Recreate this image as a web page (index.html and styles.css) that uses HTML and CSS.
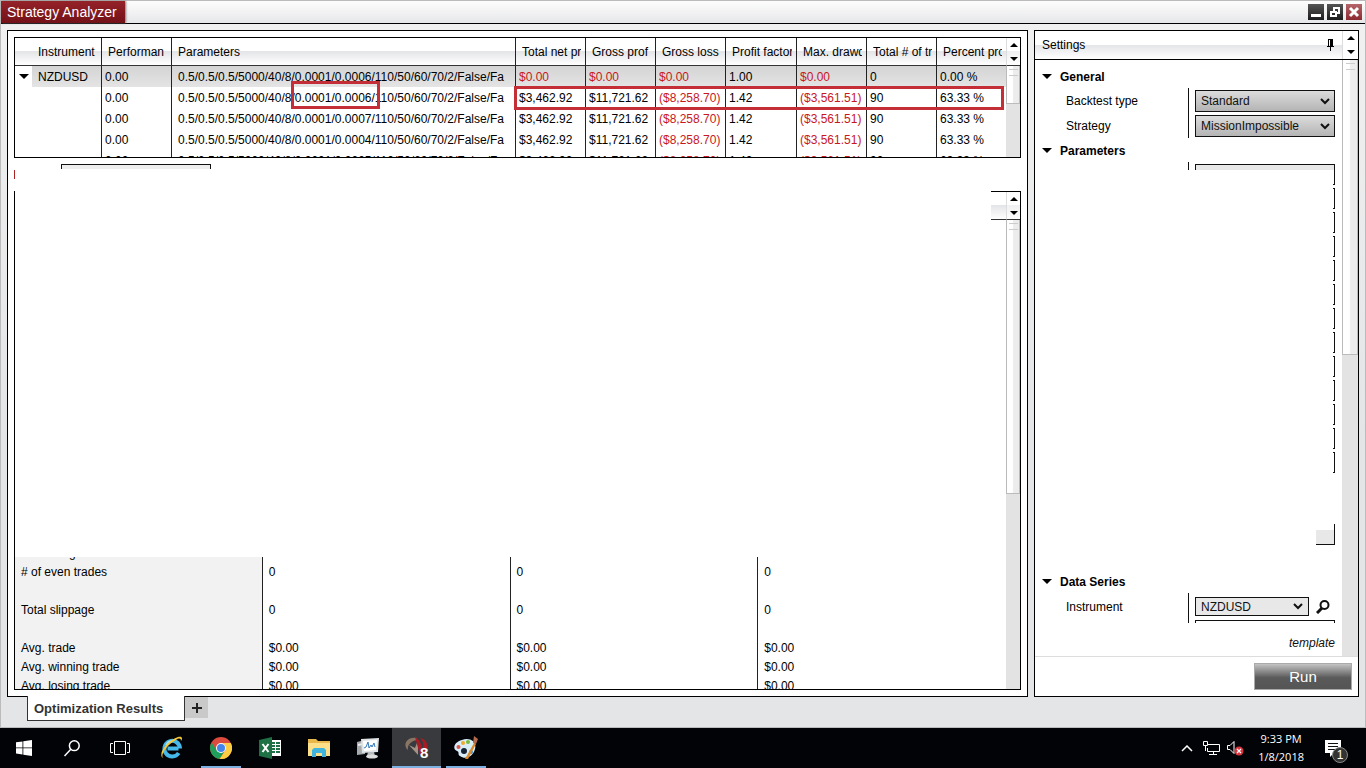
FILE: index.html
```html
<!DOCTYPE html>
<html lang="en">
<head>
  <meta charset="UTF-8">
  <title>Strategy Analyzer</title>
  <link rel="stylesheet" href="styles.css">
</head>
<body>
  <div class="window">
    <header class="titlebar">
      <h1 class="title">Strategy Analyzer</h1>
      <div class="window-buttons">
        <button class="win-btn" aria-label="Minimize"><svg width="16" height="16" viewBox="0 0 16 16"><path d="M3 10h10v3H3z" fill="#fff"/></svg></button>
        <button class="win-btn" aria-label="Restore"><svg width="16" height="16" viewBox="0 0 16 16"><path d="M7 7V4h5v5h-3M4 8h5v4H4z" fill="none" stroke="#fff" stroke-width="2"/></svg></button>
        <button class="win-btn win-close" aria-label="Close"><svg width="16" height="16" viewBox="0 0 16 16"><path d="M4 4l8 8M12 4l-8 8" stroke="#fff" stroke-width="3"/></svg></button>
      </div>
    </header>

    <main class="content">
      <section class="panel results">
        <div class="grid-box">
          <div class="grid-view">
            <table class="grid">
              <colgroup>
                <col class="c-inst"><col class="c-num"><col class="c-params"><col class="c-num"><col class="c-num"><col class="c-num"><col class="c-pf"><col class="c-num"><col class="c-num"><col class="c-last">
              </colgroup>
              <thead>
                <tr><th>Instrument</th><th><span>Performan</span></th><th>Parameters</th><th><span>Total net pr</span></th><th><span>Gross prof</span></th><th><span>Gross loss</span></th><th><span>Profit factor</span></th><th><span>Max. drawd</span></th><th><span>Total # of tr</span></th><th><span>Percent pro</span></th></tr>
              </thead>
              <tbody>
                <tr class="selected"><td><button class="expander" aria-label="Collapse"><svg width="10" height="6"><path d="M0 0h10L5 5z"/></svg></button>NZDUSD</td><td>0.00</td><td>0.5/0.5/0.5/5000/40/8/0.0001/0.0006/110/50/60/70/2/False/Fa</td><td class="neg">$0.00</td><td class="neg">$0.00</td><td class="neg">$0.00</td><td>1.00</td><td class="neg">$0.00</td><td>0</td><td>0.00 %</td></tr>
                <tr><td></td><td>0.00</td><td>0.5/0.5/0.5/5000/40/8/0.0001/0.0006/110/50/60/70/2/False/Fa</td><td>$3,462.92</td><td>$11,721.62</td><td class="neg">($8,258.70)</td><td>1.42</td><td class="neg">($3,561.51)</td><td>90</td><td>63.33 %</td></tr>
                <tr><td></td><td>0.00</td><td>0.5/0.5/0.5/5000/40/8/0.0001/0.0007/110/50/60/70/2/False/Fa</td><td>$3,462.92</td><td>$11,721.62</td><td class="neg">($8,258.70)</td><td>1.42</td><td class="neg">($3,561.51)</td><td>90</td><td>63.33 %</td></tr>
                <tr><td></td><td>0.00</td><td>0.5/0.5/0.5/5000/40/8/0.0001/0.0004/110/50/60/70/2/False/Fa</td><td>$3,462.92</td><td>$11,721.62</td><td class="neg">($8,258.70)</td><td>1.42</td><td class="neg">($3,561.51)</td><td>90</td><td>63.33 %</td></tr>
                <tr><td></td><td>0.00</td><td>0.5/0.5/0.5/5000/40/8/0.0001/0.0005/110/50/60/70/2/False/Fa</td><td>$3,462.92</td><td>$11,721.62</td><td class="neg">($8,258.70)</td><td>1.42</td><td class="neg">($3,561.51)</td><td>90</td><td>63.33 %</td></tr>
              </tbody>
            </table>
          </div>
          <div class="scroll">
            <div class="scroll-head"><svg width="8" height="18"><path d="M0 4h8L4 0zM0 14h8l-4 4z"/></svg></div>
            <div class="thumb thumb-short"></div>
          </div>
          <div class="mark mark-params"></div>
          <div class="mark mark-row"></div>
        </div>

        <div class="display-bar">
          <div class="display-label"></div>
          <div class="display-field"></div>
        </div>

        <div class="summary-box">
          <div class="summary-view">
            <div class="summary-head"></div>
            <div class="stats">
              <table class="stats-table">
                <tbody>
                  <tr><th># of losing trades</th><td>0</td><td>0</td><td>0</td></tr>
                  <tr><th># of even trades</th><td>0</td><td>0</td><td>0</td></tr>
                  <tr><th></th><td></td><td></td><td></td></tr>
                  <tr><th>Total slippage</th><td>0</td><td>0</td><td>0</td></tr>
                  <tr><th></th><td></td><td></td><td></td></tr>
                  <tr><th>Avg. trade</th><td>$0.00</td><td>$0.00</td><td>$0.00</td></tr>
                  <tr><th>Avg. winning trade</th><td>$0.00</td><td>$0.00</td><td>$0.00</td></tr>
                  <tr><th>Avg. losing trade</th><td>$0.00</td><td>$0.00</td><td>$0.00</td></tr>
                </tbody>
              </table>
            </div>
          </div>
          <div class="scroll scroll-top">
            <div class="scroll-head"><svg width="8" height="18"><path d="M0 4h8L4 0zM0 14h8l-4 4z"/></svg></div>
            <div class="thumb thumb-long"></div>
          </div>
        </div>
      </section>

      <aside class="panel settings">
        <div class="settings-head">
          <span>Settings</span>
          <svg class="pin" width="8" height="12" viewBox="0 0 8 12"><path d="M2 0h5v7h1v1H5v4H4V8H1V7h1zM3 1v6h1V1z" fill-rule="evenodd"/></svg>
          <div class="head-arrows"><svg width="8" height="18"><path d="M0 4h8L4 0zM0 14h8l-4 4z"/></svg></div>
        </div>
        <div class="settings-body">
          <div class="settings-list">
            <h2 class="section"><svg width="10" height="6"><path d="M0 0h10L5 5z"/></svg>General</h2>
            <div class="group">
              <label for="backtest">Backtest type</label>
              <div class="field">
                <select id="backtest"><option>Standard</option></select>
                <svg class="chevron" width="10" height="7"><path d="M1 1l4 4 4-4" fill="none" stroke="#111" stroke-width="2"/></svg>
              </div>
              <label for="strategy">Strategy</label>
              <div class="field">
                <select id="strategy"><option>MissionImpossible</option></select>
                <svg class="chevron" width="10" height="7"><path d="M1 1l4 4 4-4" fill="none" stroke="#111" stroke-width="2"/></svg>
              </div>
            </div>
            <h2 class="section"><svg width="10" height="6"><path d="M0 0h10L5 5z"/></svg>Parameters</h2>
            <div class="cut-row cut-params"><div class="cut-field"></div></div>
            <div class="edges">
              <div class="edge edge-first"></div>
              <div class="edge"></div>
              <div class="edge"></div>
              <div class="edge"></div>
              <div class="edge"></div>
              <div class="edge"></div>
              <div class="edge"></div>
              <div class="edge"></div>
              <div class="edge"></div>
              <div class="edge"></div>
              <div class="edge"></div>
              <div class="edge"></div>
              <div class="edge"></div>
              <div class="edge-last"><div class="corner"></div></div>
            </div>
            <h2 class="section"><svg width="10" height="6"><path d="M0 0h10L5 5z"/></svg>Data Series</h2>
            <div class="group group-data">
              <label for="instrument">Instrument</label>
              <div class="field field-search">
                <select id="instrument" class="flat"><option>NZDUSD</option></select>
                <svg class="chevron" width="10" height="7"><path d="M1 1l4 4 4-4" fill="none" stroke="#111" stroke-width="2"/></svg>
                <button class="find" aria-label="Search"><svg width="14" height="14" viewBox="0 0 14 14"><circle cx="8.5" cy="5" r="4" fill="none" stroke="#111" stroke-width="2"/><path d="M6 8l-5 5" stroke="#111" stroke-width="3"/></svg></button>
              </div>
            </div>
            <div class="cut-row cut-data"><div class="cut-field"></div></div>
            <a class="template" href="#">template</a>
          </div>
          <div class="scroll scroll-wide">
            <div class="thumb thumb-settings"></div>
          </div>
        </div>
        <div class="settings-foot">
          <button class="run">Run</button>
        </div>
      </aside>
    </main>

    <nav class="tabs">
      <button class="tab">Optimization Results</button>
      <button class="tab-add" aria-label="Add tab"><svg width="10" height="10"><path d="M0 5h10M5 0v10" stroke="#222" stroke-width="2"/></svg></button>
    </nav>
  </div>

  <footer class="taskbar">
    <button class="task task-sys" aria-label="Start"><svg width="16" height="16" viewBox="0 0 16 16" fill="#fff"><path d="M0 2.3L6.5 1.4v6.1H0zM7.3 1.3L16 0v7.5H7.3zM0 8.3h6.5v6.2L0 13.6zM7.3 8.3H16V16l-8.7-1.3z"/></svg></button>
    <button class="task task-sys" aria-label="Search"><svg width="16" height="17" viewBox="0 0 16 17" fill="none" stroke="#fff" stroke-width="1.5"><circle cx="10.3" cy="5.7" r="4.9"/><path d="M6.8 9.2L.5 16"/></svg></button>
    <button class="task task-sys" aria-label="Task view"><svg width="20" height="14" viewBox="0 0 20 14" fill="none" stroke="#fff"><path d="M4.5.5h11v13h-11zM3 2.5H.5v9H3M17 2.5h2.5v9H17"/></svg></button>
    <div class="apps">
      <button class="task" aria-label="Internet Explorer">
        <svg width="24" height="24" viewBox="0 0 24 24"><path d="M18.5 12.5H7.5M18.7 17A7.8 7.8 0 1 1 20 12.5" fill="none" stroke="#45b8ea" stroke-width="4"/><path d="M6 9a7 7 0 0 1 7-4" fill="none" stroke="#a9e4fa" stroke-width="1.5"/><path d="M3 22C-3 18 8 4 18 1c4-1 5 1 3 4 0-3-2-3-5-1C8 8 0 18 3 22z" fill="#f4c93c"/></svg>
      </button>
      <button class="task running" aria-label="Chrome">
        <svg width="22" height="22" viewBox="0 0 22 22"><circle cx="11" cy="11" r="11" fill="#dd4b3e"/><path d="M1.5 5.5A11 11 0 0 0 9.5 21.9L15 13.3 11 16 6.7 13.5z" fill="#1e9f5b"/><path d="M11 6h9.8A11 11 0 0 1 9.5 21.9L15.3 13.5A5 5 0 0 0 11 6z" fill="#fccd42"/><circle cx="11" cy="11" r="5" fill="#fff"/><circle cx="11" cy="11" r="4" fill="#4484ec"/></svg>
      </button>
      <button class="task" aria-label="Excel">
        <svg width="22" height="22" viewBox="0 0 22 22"><path d="M11 3h11v16H11z" fill="#fff"/><path d="M13 5h3v2h-3zM17 5h4v2h-4zM13 8h3v2h-3zM17 8h4v2h-4zM13 11h3v2h-3zM17 11h4v2h-4zM13 14h3v2h-3zM17 14h4v2h-4z" fill="#1e7145"/><path d="M0 3l13-3v22L0 19z" fill="#1e7145"/><path d="M3.5 7l6 8M9.5 7l-6 8" stroke="#fff" stroke-width="2"/></svg>
      </button>
      <button class="task" aria-label="File Explorer">
        <svg width="22" height="20" viewBox="0 0 22 20"><path d="M0 1h8l2 2h12v15H0z" fill="#e8b84c"/><path d="M0 5h22v13H0z" fill="#fbe089"/><path d="M4 19v-7l2-2h10l2 2v7h-4v-4H8v4z" fill="#3fb4dc"/></svg>
      </button>
      <button class="task" aria-label="System monitor">
        <svg width="24" height="22" viewBox="0 0 24 22"><path d="M1 5l8-2v14l-8 1z" fill="#a7aaac"/><path d="M2 7l5-1v2L2 9z" fill="#eee"/><path d="M5 2l18-1-1 14-16 1z" fill="#dfe3e5"/><path d="M7 4l14-1-1 10-12 1z" fill="#fff"/><path d="M8 11l2-1 2-5 1 6 2-3 1 2 2-4 1 4" fill="none" stroke="#3278ba"/><path d="M12 15h6l1 4H11z" fill="#b8bcbf"/><ellipse cx="16" cy="19.5" rx="6" ry="2" fill="#ddd"/></svg>
      </button>
      <button class="task running active" aria-label="NinjaTrader 8">
        <svg width="26" height="24" viewBox="0 0 26 24"><path d="M13 2C3 0-2 9 4 14c-1-5 3-9 9-10z" fill="#8a7463"/><path d="M5 9l9 10V4l-3 8z" fill="#a49384"/><path d="M11 1c5 3 7 8 7 13 3-5 1-9-2-12 7 1 10 9 5 16l-5 1z" fill="#a91b24"/><text class="icon-digit" x="16" y="22">8</text></svg>
      </button>
      <button class="task running" aria-label="Paint">
        <svg width="26" height="24" viewBox="0 0 26 24"><path d="M9 4c8-3 15 2 13 9-2 8-10 11-15 7-3-2 0-4-3-5-5-2-3-9 5-11z" fill="#d9edf8"/><circle cx="5.5" cy="11" r="2" fill="#d9584a"/><circle cx="10" cy="7" r="2" fill="#f0a92f"/><circle cx="15" cy="6" r="2" fill="#79bb3c"/><circle cx="11" cy="15" r="3" fill="#152231"/><circle cx="18" cy="16" r="2" fill="#3b8fd0"/><path d="M12 23l9-16 2 1-8 15z" fill="#d98b2b"/><path d="M20 7l1-7 4 3-2 5z" fill="#b36b4b"/></svg>
      </button>
    </div>

    <div class="tray">
      <svg width="12" height="7"><path d="M1 6l5-5 5 5" fill="none" stroke="#fff" stroke-width="1.5"/></svg>
      <svg width="17" height="15" viewBox="0 0 17 15" fill="none" stroke="#fff"><path d="M5 3.5h11.5v7H4.5V7M10.5 11v3M6 13.5h8M.5.5h4v4h-4zM2.5 5v5"/></svg>
      <svg class="volume" width="17" height="16" viewBox="0 0 17 16"><path d="M.5 5.5H3l4-4v12l-4-4H.5z" fill="none" stroke="#fff"/><circle cx="12" cy="11" r="4.5" fill="#d8353f"/><path d="M10 9l4 4M14 9l-4 4" stroke="#fff" stroke-width="1.2"/></svg>
      <div class="clock"><span>9:33 PM</span><span>1/8/2018</span></div>
      <div class="notice">
        <svg width="17" height="17" viewBox="0 0 17 17"><path d="M0 0h16v13H9l-4 4v-4H0z" fill="#fff"/><path d="M3 3.5h10M3 6.5h10M3 9.5h7" stroke="#111"/></svg>
        <span class="badge">1</span>
      </div>
    </div>
  </footer>
</body>
</html>
```

FILE: styles.css
```css
* {
  box-sizing: border-box;
}
body {
  margin: 0;
  height: 100vh;
  display: flex;
  flex-direction: column;
  font-family: "Liberation Sans", Arial, sans-serif;
  font-size: 12px;
  color: #000;
  overflow: hidden;
}
button, select {
  font-family: inherit;
  font-size: 12px;
  color: #111;
  padding: 0;
  margin: 0;
  border: none;
  border-radius: 0;
  background: none;
}
svg {
  display: block;
}

/* window frame */
.window {
  flex: 1;
  min-height: 0;
  display: flex;
  flex-direction: column;
  border: 1px solid #bbb;
  background: linear-gradient(#f1f1f1, #e4e5e7 60%);
}
.titlebar {
  display: flex;
  justify-content: space-between;
  height: 23px;
  border-bottom: 1px solid #000;
  background: linear-gradient(#fdfdfd, #e6e7e9);
}
.title {
  margin: 0;
  padding: 0 8px 0 6px;
  font-size: 14px;
  line-height: 22px;
  font-weight: normal;
  color: #fff;
  background: linear-gradient(#952229, #741118);
  box-shadow: 1px 0 2px #777;
}
.window-buttons {
  display: flex;
  gap: 3px;
  padding: 3px 3px 0 0;
}
.win-btn {
  width: 16px;
  height: 16px;
  background: linear-gradient(#555, #1b1b1b);
}
.win-close {
  background: linear-gradient(#b5656a, #8c2a30);
}

.content {
  flex: 1;
  min-height: 0;
  display: flex;
  gap: 6px;
  padding: 6px 6px 0;
}
.panel {
  display: flex;
  flex-direction: column;
  border: 1px solid #000;
  background: #fff;
}
.results {
  flex: 1;
  min-width: 0;
  padding: 6px;
}
.settings {
  width: 325px;
}

/* results grid */
.grid-box {
  position: relative;
  display: flex;
  height: 121px;
  border: 1px solid #000;
}
.grid-view {
  flex: 1;
  min-width: 0;
  overflow: hidden;
}
.grid {
  width: 100%;
  table-layout: fixed;
  border-collapse: separate;
  border-spacing: 0;
}
.c-inst {
  width: 87px;
}
.c-num {
  width: 70px;
}
.c-pf {
  width: 71px;
}
.c-last {
  width: 69px;
}
.grid th {
  height: 28px;
  padding: 0 4px 0 6px;
  font-weight: normal;
  text-align: left;
  white-space: nowrap;
  border-right: 1px solid #222;
  border-bottom: 1px solid #333;
  background: linear-gradient(#fff 50%, #e4e5e8 50%, #fff);
}
.grid th span {
  display: block;
  overflow: hidden;
}
.grid td {
  height: 21px;
  padding: 0 3px;
  white-space: nowrap;
  overflow: hidden;
  border-right: 1px solid #222;
}
.grid th:first-child, .grid td:first-child {
  padding-left: 23px;
}
.grid td:nth-child(3) {
  padding-left: 6px;
}
.grid th:last-child, .grid td:last-child {
  border-right: none;
}
.selected td {
  background: linear-gradient(#d4d4d4, #e4e4e4);
}
.grid .selected td:first-child {
  padding-left: 0;
  background: linear-gradient(to right, #fff 17px, transparent 17px), linear-gradient(#d4d4d4, #e4e4e4);
}
.expander {
  width: 23px;
  padding-left: 4px;
  vertical-align: middle;
}
.grid .neg {
  color: #c8171d;
}
.mark {
  position: absolute;
  border: 3px solid #c42e36;
}
.mark-params {
  left: 276px;
  top: 43px;
  width: 89px;
  height: 28px;
}
.mark-row {
  left: 499px;
  right: 16px;
  top: 48px;
  height: 24px;
}

/* scroll bars */
.scroll {
  width: 14px;
  background: #e3e3e3;
}
.scroll-head {
  display: flex;
  align-items: center;
  justify-content: center;
  height: 28px;
  border-left: 1px solid #ddd;
  border-bottom: 1px solid #333;
  background: linear-gradient(#fff 50%, #f0f0f2 50%, #fff);
}
.thumb {
  border: 1px solid #bbb;
  border-top: none;
  background: linear-gradient(to right, #fff 45%, #ececec 55%);
}
.thumb::before {
  content: "";
  display: block;
  width: 9px;
  height: 5px;
  margin: 0 auto;
  border-top: 1px solid #ccc;
  border-bottom: 1px solid #ccc;
  transform: translateY(3px);
}
.thumb-short {
  height: 38px;
}
.thumb-long {
  height: 274px;
}
.scroll-wide {
  width: 16px;
}
.thumb-settings {
  height: 295px;
}

.display-bar {
  display: flex;
  gap: 45px;
  height: 33px;
  padding-top: 6px;
}
.display-label {
  width: 2px;
  height: 9px;
  margin-top: 6px;
  border-left: 1px solid #a22;
}
.display-field {
  width: 150px;
  height: 5px;
  border: 1px solid #111;
  border-bottom: none;
  background: #eee;
}

/* summary */
.summary-box {
  flex: 1;
  min-height: 0;
  display: flex;
  border: 1px solid #000;
  border-top: none;
}
.summary-view {
  flex: 1;
  display: flex;
  flex-direction: column;
  justify-content: space-between;
  min-width: 0;
}
.summary-head {
  align-self: flex-end;
  width: 15px;
  height: 29px;
  border-top: 1px solid #000;
  border-bottom: 1px solid #333;
  background: linear-gradient(#fff 50%, #e4e5e8 50%, #fff);
}
.scroll-top {
  border-top: 1px solid #000;
}
.stats {
  height: 132px;
  overflow: hidden;
}
.stats-table {
  width: 100%;
  margin-top: -14px;
  table-layout: fixed;
  border-collapse: separate;
  border-spacing: 0;
}
.stats-table th, .stats-table td {
  width: 25%;
  height: 19px;
  padding: 0 6px;
  font-weight: normal;
  text-align: left;
  border-right: 1px solid #222;
}
.stats-table th {
  background: #f2f2f2;
}
.stats-table td:last-child {
  border-right: none;
}

/* settings */
.settings-head {
  display: flex;
  align-items: center;
  height: 29px;
  padding-left: 7px;
  border-bottom: 1px solid #000;
  background: linear-gradient(#fff 50%, #e4e5e8 50%, #fff);
}
.pin {
  margin-left: auto;
}
.head-arrows {
  display: flex;
  align-items: center;
  justify-content: center;
  width: 16px;
  height: 28px;
  margin-left: 8px;
  border-left: 1px solid #ddd;
  background: #fff;
}
.settings-body {
  flex: 1;
  min-height: 0;
  display: flex;
}
.settings-list {
  flex: 1;
  display: flex;
  flex-direction: column;
  padding: 6px 7px 0 0;
}
.section {
  display: flex;
  align-items: center;
  gap: 8px;
  height: 22px;
  margin: 0;
  padding-left: 7px;
  font-size: 12px;
}
.group {
  display: grid;
  grid-template-columns: 1fr 147px;
  grid-template-rows: 26px 24px;
  margin-bottom: 2px;
}
.group label {
  display: flex;
  align-items: center;
  padding-left: 31px;
}
.field {
  position: relative;
  display: flex;
  align-items: center;
  padding-left: 6px;
  border-left: 1px solid #111;
}
.field select {
  appearance: none;
  width: 100%;
  height: 22px;
  padding: 0 5px;
  border: 1px solid #111;
  background: linear-gradient(#dcdcdc, #b4b4b4);
}
.chevron {
  position: absolute;
  right: 5px;
  pointer-events: none;
}
.group-data {
  grid-template-rows: 27px;
  margin-bottom: 0;
}
.field-search .flat {
  width: 114px;
  height: 19px;
  background: #e8e8e8;
}
.field-search .chevron {
  right: 32px;
}
.find {
  margin-left: 7px;
}
.cut-row {
  width: 147px;
  margin-left: auto;
  padding-left: 6px;
  border-left: 1px solid #111;
}
.cut-field {
  height: 100%;
  border: 1px solid #111;
  border-bottom: none;
  background: #e8e8e8;
}
.cut-params {
  height: 8px;
  padding-top: 2px;
}
.cut-data {
  height: 3px;
}
.cut-data .cut-field {
  background: #fff;
}
.edges {
  flex: 1;
  display: flex;
  flex-direction: column;
  align-items: flex-end;
  gap: 3px;
}
.edge {
  width: 2px;
  height: 21px;
  border: 1px solid #111;
  border-left: none;
}
.edge-first {
  height: 15px;
  border-top: none;
}
.edge-last {
  display: flex;
  align-items: flex-end;
  height: 21px;
  margin-top: 48px;
  border-right: 1px solid #111;
}
.corner {
  width: 18px;
  height: 15px;
  border-bottom: 1px solid #111;
  background: #e8e8e8;
}
.template {
  align-self: flex-end;
  padding: 13px 0 6px;
  line-height: 14px;
  font-style: italic;
  color: #111;
  text-decoration: none;
}
.template:hover {
  text-decoration: underline;
}
.settings-foot {
  display: flex;
  justify-content: flex-end;
  height: 40px;
  padding: 6px;
  border-top: 1px solid #ddd;
}
.run {
  width: 98px;
  height: 27px;
  border: 1px solid #aaa;
  font-size: 15px;
  color: #fff;
  background: linear-gradient(#c4c4c4, #5a5a5a 55%, #555);
}

/* bottom tabs */
.tabs {
  display: flex;
  height: 30px;
  padding-left: 26px;
}
.tab {
  height: 25px;
  margin-top: -1px;
  padding: 0 21px 0 6px;
  border: 1px solid #333;
  border-top: none;
  background: #fff;
  font-size: 13px;
  font-weight: bold;
  color: #333;
  position: relative;
}
.tab-add {
  display: flex;
  align-items: center;
  justify-content: center;
  width: 23px;
  height: 21px;
  background: #c9c9c9;
}

/* taskbar */
.taskbar {
  display: flex;
  height: 40px;
  background: #020307;
}
.apps {
  display: flex;
  margin-left: 3px;
}
.task {
  display: flex;
  align-items: center;
  justify-content: center;
  width: 49px;
}
.task-sys {
  width: 48px;
}
.running {
  background: linear-gradient(#7cb0e0, #7cb0e0) bottom / 40px 2px no-repeat;
}
.active {
  background: linear-gradient(#7cb0e0, #7cb0e0) bottom / 100% 2px no-repeat, #393a3d;
}
.icon-digit {
  font-size: 15px;
  font-weight: bold;
  fill: #fff;
}
.tray {
  display: flex;
  align-items: center;
  gap: 10px;
  margin-left: auto;
  padding-right: 24px;
}
.volume {
  margin-left: -3px;
}
.clock {
  display: flex;
  flex-direction: column;
  align-items: center;
  margin: 0 11px 0 4px;
  font-family: "Open Sans", sans-serif;
  font-size: 11px;
  line-height: 18px;
  color: #fff;
}
.notice {
  position: relative;
}
.badge {
  position: absolute;
  left: 7px;
  top: 7px;
  width: 16px;
  height: 16px;
  border: 1px solid #888;
  border-radius: 50%;
  background: #333;
  color: #fff;
  line-height: 14px;
  text-align: center;
}
```
